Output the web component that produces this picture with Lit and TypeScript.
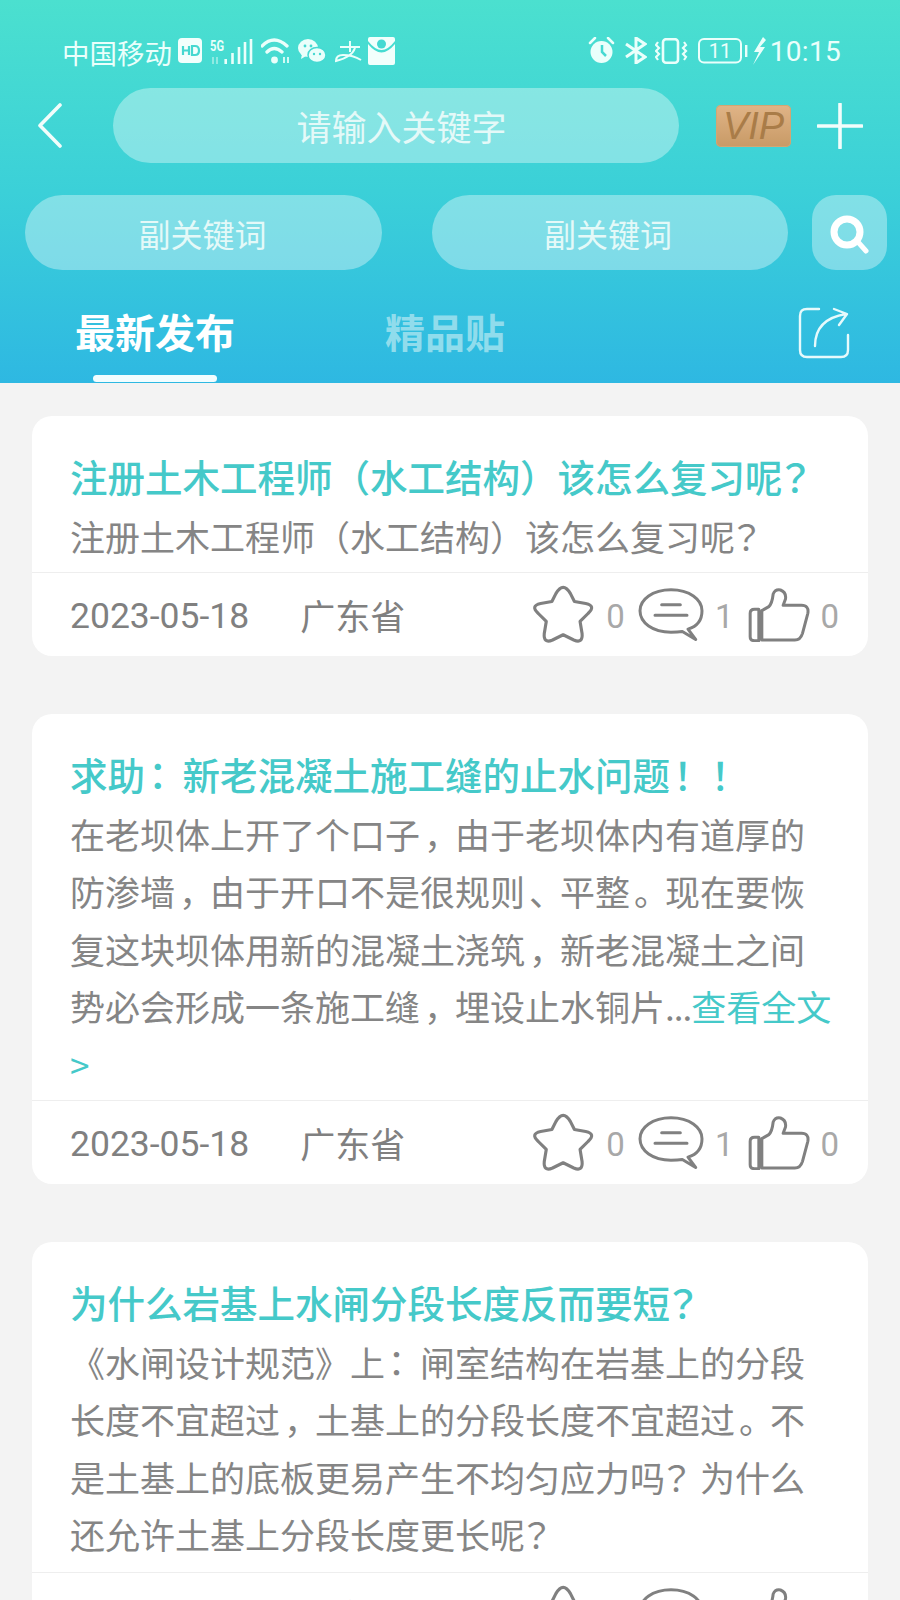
import { LitElement, html, css, svg } from "lit";
import { customElement } from "lit/decorators.js";

const posts = [
  {
    title: "注册土木工程师（水工结构）该怎么复习呢？",
    body: "注册土木工程师（水工结构）该怎么复习呢？",
    more: false,
  },
  {
    title: "求助：新老混凝土施工缝的止水问题！！",
    body: "在老坝体上开了个口子，由于老坝体内有道厚的防渗墙，由于开口不是很规则、平整。现在要恢复这块坝体用新的混凝土浇筑，新老混凝土之间势必会形成一条施工缝，埋设止水铜片...",
    more: true,
  },
  {
    title: "为什么岩基上水闸分段长度反而要短？",
    body: "《水闸设计规范》上：闸室结构在岩基上的分段长度不宜超过，土基上的分段长度不宜超过。不是土基上的底板更易产生不均匀应力吗？为什么还允许土基上分段长度更长呢？",
    more: false,
  },
];

/* Punctuation sits differently in the reference's font: ？！： near the centre, ，、。 nudged right, ... tight. */
const punct = (s: string) =>
  s.split(/([？！：]|[，、。]|\.\.\.)/).map((part) => {
    if (part === "？" || part === "！" || part === "：") return html`<span class="mid">${part}</span>`;
    if (part === "，" || part === "、" || part === "。") return html`<span class="low">${part}</span>`;
    if (part === "...") return html`<span class="dots">${part}</span>`;
    return part;
  });

const starIcon = svg`<svg class="ic star" viewBox="96 72 190 178"><path d="M168 98 Q190 60 212 98 L224 122 L258 128 Q290 135 265 158 L241 182 L247 218 Q250 250 222 238 L190 222 L158 238 Q130 250 133 218 L139 182 L115 158 Q90 135 122 128 L156 122 Z" fill="none" stroke="#808080" stroke-width="9.500" stroke-linejoin="round"/></svg>`;
const commentIcon = svg`<svg class="ic comment" viewBox="416 84 198 158"><path d="M515 89 C570 89 608 118 608 152 C608 182 590 200 566 207 L589 238 L549 214 C535 216 525 216 515 216 C460 216 422 188 422 152 C422 118 460 89 515 89 Z" fill="none" stroke="#808080" stroke-width="9" stroke-linejoin="round"/><path d="M487 134 H543 M467 165 H563" stroke="#808080" stroke-width="9" stroke-linecap="round"/></svg>`;
const thumbIcon = svg`<svg class="ic thumb" viewBox="745 82 185 162"><path d="M786 238 V150 L807 138 Q817 128 820 100 Q826 85 842 88 Q860 95 857 115 L850 134 H905 Q928 134 924 158 L908 218 Q902 238 885 238 Z M777 146 H764 Q751 146 751 158 V228 Q751 240 764 240 H777 Z" fill="none" stroke="#808080" stroke-width="9" stroke-linejoin="round"/></svg>`;

@customElement("app-root")
export class AppRoot extends LitElement {
  static styles = css`
    :host { display: block; width: 900px; height: 1600px; overflow: hidden; background: #f3f3f3; font-family: "Noto Sans CJK SC", "Roboto", sans-serif; }
    .head { height: 383px; background: linear-gradient(180deg, #4be0cf 0%, #3bd0d8 50%, #2eb8e2 100%); display: flex; flex-direction: column; }
    .status { height: 88px; box-sizing: border-box; padding: 37px 59px 0 62px; display: flex; align-items: flex-start; color: #eafffb; }
    .carrier { font-size: 27.5px; line-height: 30px; font-weight: 400; margin-right: 6px; }
    .status svg { display: block; flex: none; }
    .spacer { flex: 1; }
    .clock { font: 400 28px/30px Roboto, sans-serif; margin-left: 4px; letter-spacing: 0.3px; }
    .nav { height: 75px; display: flex; align-items: center; padding-left: 37px; }
    .back { width: 25px; height: 45px; margin-right: 51px; flex: none; }
    .pill { background: rgba(255,255,255,.36); border-radius: 38px; height: 75px; display: flex; align-items: center; justify-content: center; color: #e4f9f8; box-sizing: border-box; }
    .main { width: 566px; font-size: 35px; margin-right: 37px; padding-left: 11px; }
    .vip { width: 75px; height: 42px; border-radius: 5px; background: linear-gradient(180deg, #e0b487 0%, #c89a66 100%); box-shadow: inset 0 0 0 1px #d2a673; color: #a97c48; font: italic 400 38px/42px "Liberation Sans", sans-serif; text-align: center; margin-right: 26px; flex: none; }
    .plus { width: 46px; height: 46px; flex: none; }
    .subs { display: flex; margin-top: 32px; padding-left: 25px; height: 75px; }
    .sub { width: 357px; font-size: 32px; padding-right: 2px; }
    .sub + .sub { margin-left: 50px; width: 356px; padding-right: 4px; }
    .go { width: 75px; height: 75px; border-radius: 24px; background: rgba(255,255,255,.36); margin-left: 24px; display: flex; align-items: center; justify-content: center; flex: none; }
    .tabs { flex: 1; display: flex; padding-left: 75px; position: relative; }
    .tab { font-size: 40px; line-height: 50px; font-weight: 700; padding-top: 36px; color: #fff; position: relative; }
    .tab.off { color: #90dcec; margin-left: 150px; }
    .tab.on::after { content: ""; position: absolute; left: 18px; width: 124px; top: 105px; height: 7px; border-radius: 4px; background: #f2fdff; }
    .share { width: 52px; height: 52px; margin: 37px 50px 0 auto; flex: none; }
    .list { padding: 33px 32px 0; display: flex; flex-direction: column; gap: 58px; }
    .card { background: #fff; border-radius: 20px; }
    .text { padding: 29px 32px 7.5px 38px; }
    .card:last-child .text { padding-bottom: 9px; }
    .title { font-size: 37.5px; line-height: 61.5px; color: #45c9c9; font-weight: 500; white-space: nowrap; }
    .body { font-size: 35px; line-height: 57.5px; color: #858585; font-weight: 400; word-break: break-all; }
    .mid { font-family: "Noto Sans CJK JP", sans-serif; margin-left: -6px; margin-right: 6px; }
    .low { margin-left: 4px; margin-right: -4px; }
    .dots { letter-spacing: -1px; }
    .more { color: #45c9c9; }
    .foot { border-top: 1px solid #eeeeee; height: 84.5px; box-sizing: border-box; padding: 4px 0 0 38px; display: flex; align-items: center; color: #808080; font-size: 35px; }
    .date { font: 400 35.5px/40px Roboto, sans-serif; margin-right: 51px; }
    .place { margin-top: -4px; }
    .stats { margin-left: auto; display: flex; align-items: center; padding-right: 29px; }
    .n { font: 400 33px/40px Roboto, sans-serif; color: #a8a8a8; margin-top: 2px; }
    .ic { display: block; flex: none; }
    .star { width: 63px; height: 59px; margin-right: 11px; margin-top: -3px; }
    .comment { width: 66px; height: 53px; margin-left: 13px; margin-right: 11px; margin-top: -3px; }
    .thumb { width: 62px; height: 54px; margin-left: 15px; margin-right: 10px; margin-top: -3px; }
  `;

  render() {
    return html`
      <div class="head">
        <div class="status">
          <span class="carrier">中国移动</span>
          <svg width="24" height="25" viewBox="0 0 24 25" style="margin:1px 8px 0 0"><rect width="24" height="25" rx="4" fill="#f2fffc"/><path d="M5 8v9M11 8v9M5 12.500h6" stroke="#46d8d0" stroke-width="2.200"/><path d="M14 8h3q4 0 4 4.500t-4 4.500h-3z" fill="none" stroke="#46d8d0" stroke-width="2.200"/></svg>
          <svg width="43" height="28" viewBox="0 0 43 28" style="margin:1px 8px 0 0"><text x="0" y="13" font-size="14" font-weight="700" textLength="14" lengthAdjust="spacingAndGlyphs" font-family="Roboto, sans-serif" fill="#eafffb">5G</text><path d="M3 19v7M7 19v7" stroke="#a8efe8" stroke-width="1.500"/><path d="M15.700 21V26M22.500 15V26M29 9V26M35 4V26M41 1V26" stroke="#eafffb" stroke-width="2.600" fill="none"/></svg>
          <svg width="31" height="27" viewBox="0 0 31 27" style="margin-right:6px"><path d="M1 9Q13-3 26 9M6 15Q13 8 21 15" fill="none" stroke="#eafffb" stroke-width="3.300" stroke-linecap="round"/><circle cx="13.500" cy="23" r="3.400" fill="#eafffb"/><path d="M23 20v6M27 20v6" stroke="#eafffb" stroke-width="1.700"/></svg>
          <svg width="28" height="26" viewBox="0 0 28 26" style="margin:1px 9px 0 0"><ellipse cx="10" cy="10" rx="10" ry="9" fill="#eafffb"/><path d="M4 16l-1 5 5-3z" fill="#eafffb"/><ellipse cx="19" cy="17" rx="9" ry="7.500" fill="#eafffb" stroke="#45d9d2" stroke-width="1.500"/><circle cx="7" cy="8" r="1.400" fill="#45d9d2"/><circle cx="13" cy="8" r="1.400" fill="#45d9d2"/><circle cx="16" cy="16" r="1.200" fill="#45d9d2"/><circle cx="22" cy="16" r="1.200" fill="#45d9d2"/></svg>
          <svg width="27" height="24" viewBox="0 0 27 24" style="margin:3px 6px 0 0"><path d="M5 7H25M15 1V12M20 8Q17 17 1 21Q1 15 8 15Q18 15 26 20" fill="none" stroke="#eafffb" stroke-width="2"/></svg>
          <svg width="27" height="28" viewBox="0 0 27 28"><path d="M0 2Q0 0 2 0H25Q27 0 27 2V4Q20 13 13.500 13Q7 13 0 4Z" fill="#f2fffc"/><path d="M0 7Q7 15.500 13.500 15.500Q20 15.500 27 7V26Q27 28 25 28H2Q0 28 0 26Z" fill="#f2fffc"/><circle cx="13.500" cy="7" r="4.500" fill="#45d9d2"/></svg>
          <span class="spacer"></span>
          <svg width="27" height="27" viewBox="0 0 27 27" style="margin-right:10px"><circle cx="13.500" cy="15" r="11" fill="#eafffb"/><path d="M14 8v7l4 4" fill="none" stroke="#45d9d2" stroke-width="2.500"/><path d="M2 6L7 1M25 6L20 1" stroke="#eafffb" stroke-width="2.500" stroke-linecap="round"/></svg>
          <svg width="22" height="27" viewBox="0 0 22 27" style="margin-right:8px"><path d="M1 7L20 20L11 26V1L20 7L1 20" fill="none" stroke="#eafffb" stroke-width="3"/></svg>
          <svg width="33" height="26" viewBox="0 0 33 26" style="margin:1px 10px 0 0"><rect x="8" y="1.200" width="15" height="23.500" rx="3" fill="none" stroke="#eafffb" stroke-width="2.600"/><path d="M3 4l-2 3 3 3-3 3 3 3-3 3 2 3M29 4l2 3-3 3 3 3-3 3 3 3-2 3" fill="none" stroke="#eafffb" stroke-width="2.200"/></svg>
          <svg width="50" height="26" viewBox="0 0 50 26" style="margin-top:1px"><rect x="1" y="1" width="42" height="23.500" rx="5" fill="none" stroke="#eafffb" stroke-width="2"/><text x="22" y="19.500" text-anchor="middle" font-size="20" font-family="Roboto, sans-serif" fill="#eafffb">11</text><rect x="47" y="7" width="2.400" height="12" fill="#eafffb"/></svg>
          <svg width="14" height="28" viewBox="0 0 14 28" style="margin-left:4px"><path d="M11 0L2 15H7L1 28L13 10H8L14 3Z" fill="#eafffb"/></svg>
          <span class="clock">10:15</span>
        </div>
        <div class="nav">
          <svg class="back" viewBox="0 0 25 45"><path d="M23 2L3 22.500L23 43" fill="none" stroke="#f2fdfb" stroke-width="3.600" stroke-linecap="round" stroke-linejoin="round"/></svg>
          <div class="pill main">请输入关键字</div>
          <div class="vip">VIP</div>
          <svg class="plus" viewBox="0 0 46 46"><path d="M23 1V45M1 23H45" stroke="#f2fdfb" stroke-width="3.600" stroke-linecap="round"/></svg>
        </div>
        <div class="subs">
          <div class="pill sub">副关键词</div>
          <div class="pill sub">副关键词</div>
          <div class="go"><svg width="42" height="42" viewBox="0 0 42 42"><circle cx="18" cy="20" r="13" fill="none" stroke="#fff" stroke-width="7"/><path d="M29 30L37 39" stroke="#fff" stroke-width="5" stroke-linecap="round"/></svg></div>
        </div>
        <div class="tabs">
          <div class="tab on">最新发布</div>
          <div class="tab off">精品贴</div>
          <svg class="share" viewBox="0 0 52 52"><path d="M21 2H9Q2 2 2 9V43Q2 50 9 50H43Q50 50 50 43V28" fill="none" stroke="#e6fafc" stroke-width="2.400" stroke-linecap="round"/><path d="M17 39Q17 12 48 7M36 2L49 7L41 18" fill="none" stroke="#e6fafc" stroke-width="2.400" stroke-linecap="round" stroke-linejoin="round"/></svg>
        </div>
      </div>
      <div class="list">
        ${posts.map(
          (p) => html`<div class="card">
            <div class="text">
              <div class="title">${punct(p.title)}</div>
              <div class="body">${punct(p.body)}${p.more ? html`<span class="more">查看全文 &gt;</span>` : ""}</div>
            </div>
            <div class="foot">
              <span class="date">2023-05-18</span>
              <span class="place">广东省</span>
              <div class="stats">
                ${starIcon}<span class="n">0</span>
                ${commentIcon}<span class="n">1</span>
                ${thumbIcon}<span class="n">0</span>
              </div>
            </div>
          </div>`
        )}
      </div>
    `;
  }
}
